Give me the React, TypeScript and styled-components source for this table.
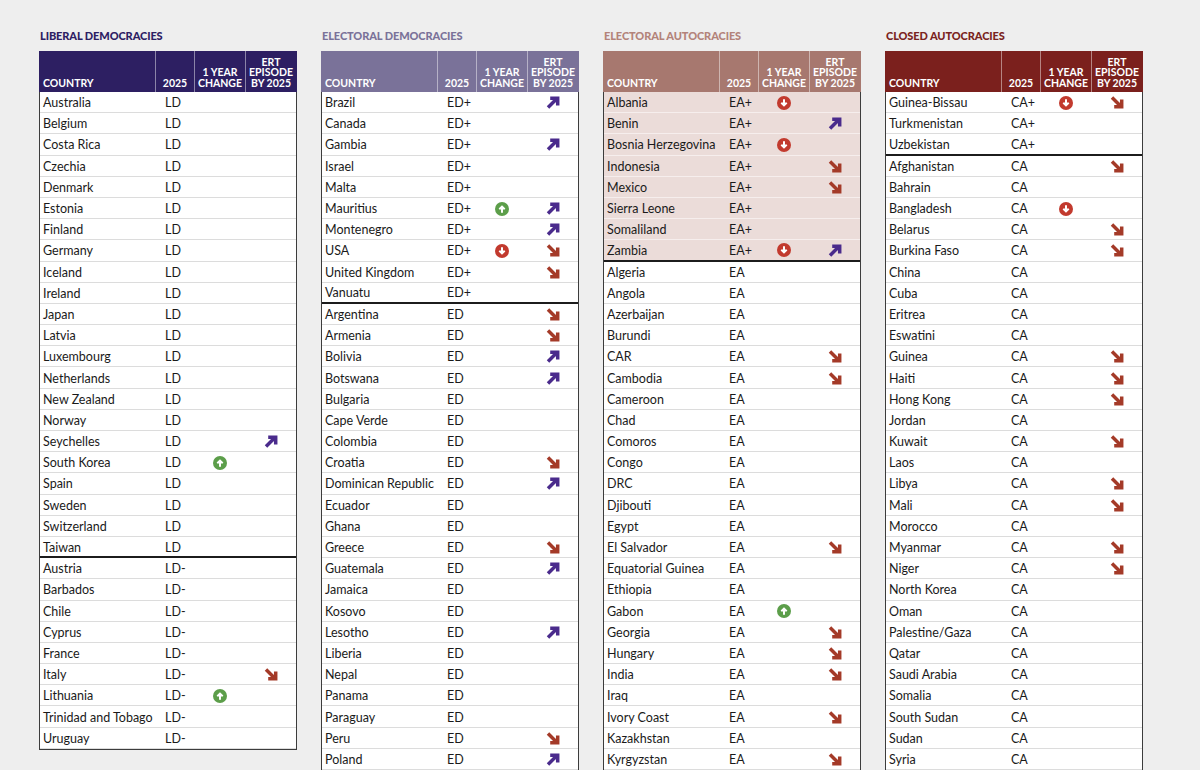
import React from 'react'
import styled, { createGlobalStyle } from 'styled-components'

type Move = 'u' | 'd' | ''

interface Group {
  code: string
  tint?: boolean
  rows: string[]
}

interface Regime {
  title: string
  ink: string
  head: string
  groups: Group[]
}

// rows are written as "Name:change:ert" with u = up, d = down
const regimes: Regime[] = [
  {
    title: 'LIBERAL DEMOCRACIES',
    ink: '#2d2063',
    head: '#2d1f62',
    groups: [
      {
        code: 'LD',
        rows: ['Australia', 'Belgium', 'Costa Rica', 'Czechia', 'Denmark', 'Estonia', 'Finland', 'Germany', 'Iceland', 'Ireland', 'Japan', 'Latvia', 'Luxembourg', 'Netherlands', 'New Zealand', 'Norway', 'Seychelles::u', 'South Korea:u', 'Spain', 'Sweden', 'Switzerland', 'Taiwan'],
      },
      {
        code: 'LD-',
        rows: ['Austria', 'Barbados', 'Chile', 'Cyprus', 'France', 'Italy::d', 'Lithuania:u', 'Trinidad and Tobago', 'Uruguay'],
      },
    ],
  },
  {
    title: 'ELECTORAL DEMOCRACIES',
    ink: '#7a7299',
    head: '#7a7299',
    groups: [
      {
        code: 'ED+',
        rows: ['Brazil::u', 'Canada', 'Gambia::u', 'Israel', 'Malta', 'Mauritius:u:u', 'Montenegro::u', 'USA:d:d', 'United Kingdom::d', 'Vanuatu'],
      },
      {
        code: 'ED',
        rows: ['Argentina::d', 'Armenia::d', 'Bolivia::u', 'Botswana::u', 'Bulgaria', 'Cape Verde', 'Colombia', 'Croatia::d', 'Dominican Republic::u', 'Ecuador', 'Ghana', 'Greece::d', 'Guatemala::u', 'Jamaica', 'Kosovo', 'Lesotho::u', 'Liberia', 'Nepal', 'Panama', 'Paraguay', 'Peru::d', 'Poland::u'],
      },
    ],
  },
  {
    title: 'ELECTORAL AUTOCRACIES',
    ink: '#b3837a',
    head: '#a7786f',
    groups: [
      {
        code: 'EA+',
        tint: true,
        rows: ['Albania:d', 'Benin::u', 'Bosnia Herzegovina:d', 'Indonesia::d', 'Mexico::d', 'Sierra Leone', 'Somaliland', 'Zambia:d:u'],
      },
      {
        code: 'EA',
        rows: ['Algeria', 'Angola', 'Azerbaijan', 'Burundi', 'CAR::d', 'Cambodia::d', 'Cameroon', 'Chad', 'Comoros', 'Congo', 'DRC', 'Djibouti', 'Egypt', 'El Salvador::d', 'Equatorial Guinea', 'Ethiopia', 'Gabon:u', 'Georgia::d', 'Hungary::d', 'India::d', 'Iraq', 'Ivory Coast::d', 'Kazakhstan', 'Kyrgyzstan::d'],
      },
    ],
  },
  {
    title: 'CLOSED AUTOCRACIES',
    ink: '#7a2320',
    head: '#7b201d',
    groups: [
      {
        code: 'CA+',
        rows: ['Guinea-Bissau:d:d', 'Turkmenistan', 'Uzbekistan'],
      },
      {
        code: 'CA',
        rows: ['Afghanistan::d', 'Bahrain', 'Bangladesh:d', 'Belarus::d', 'Burkina Faso::d', 'China', 'Cuba', 'Eritrea', 'Eswatini', 'Guinea::d', 'Haiti::d', 'Hong Kong::d', 'Jordan', 'Kuwait::d', 'Laos', 'Libya::d', 'Mali::d', 'Morocco', 'Myanmar::d', 'Niger::d', 'North Korea', 'Oman', 'Palestine/Gaza', 'Qatar', 'Saudi Arabia', 'Somalia', 'South Sudan', 'Sudan', 'Syria'],
      },
    ],
  },
]

const GlobalStyle = createGlobalStyle`
  html, body {
    margin: 0;
    background: #eeeeee;
  }
  body {
    font-family: Lato, "Liberation Sans", sans-serif;
    color: #1a1a1a;
    overflow: hidden;
  }
`

const Page = styled.div`
  display: flex;
  gap: 24px;
  padding: 29px 0 0 39px;
  height: 770px;
  box-sizing: border-box;
  overflow: hidden;
`

const Column = styled.section`
  width: 258px;
  flex: none;
`

const Title = styled.h2<{ $ink: string }>`
  margin: 0 0 8px 1px;
  height: 14px;
  font-size: 11px;
  line-height: 14px;
  font-weight: 900;
  letter-spacing: -0.1px;
  color: ${p => p.$ink};
`

const Table = styled.div`
  border: 1px solid #3c3c3c;
  border-top: none;
  background: #fff;
`

const COLS = '115px 39px 51px 51px'

const Head = styled.div<{ $head: string }>`
  display: grid;
  grid-template-columns: ${COLS};
  height: 41px;
  margin: 0 -1px;
  padding: 0 1px;
  background: ${p => p.$head};
  color: #fff;
`

const HeadCell = styled.div<{ $align?: 'left' | 'center' }>`
  display: flex;
  flex-direction: column;
  justify-content: flex-end;
  align-items: ${p => (p.$align === 'left' ? 'flex-start' : 'center')};
  text-align: center;
  padding: 0 3px 3px;
  font-size: 10.5px;
  line-height: 10.8px;
  font-weight: 700;
  white-space: nowrap;
  & + & {
    border-left: 1px solid rgba(255, 255, 255, 0.45);
  }
`

const Row = styled.div<{ $tint?: boolean; $split?: boolean }>`
  display: grid;
  grid-template-columns: ${COLS};
  align-items: center;
  height: 21.2px;
  padding-top: 1px;
  box-sizing: border-box;
  background: ${p => (p.$tint ? '#ebdcd9' : '#fff')};
  border-bottom: ${p =>
    p.$split ? '2px solid #1c1c1c' : `1px solid ${p.$tint ? '#f6eeed' : '#dcdcdc'}`};
  font-size: 12.5px;
  white-space: nowrap;
`

const Name = styled.div`
  padding-left: 3px;
`

const Code = styled.div`
  padding-left: 10px;
`

const Mark = styled.div`
  display: flex;
  justify-content: center;
  align-items: center;
`

const Circle = ({ dir }: { dir: Move }) => (
  <svg width="14" height="14" viewBox="0 0 14 14">
    <circle cx="7" cy="7" r="7" fill={dir === 'u' ? '#5c9e4a' : '#c23a2e'} />
    <g transform={dir === 'd' ? 'rotate(180 7 7)' : undefined}>
      <path d="M7 3.2 L10.4 6.6 L9 7.9 L8 6.9 V10.8 H6 V6.9 L5 7.9 L3.6 6.6 Z" fill="#fff" />
    </g>
  </svg>
)

const Arrow = ({ dir }: { dir: Move }) => (
  <svg width="14" height="13" viewBox="0 0 14 13">
    <g transform={dir === 'd' ? 'scale(1,-1) translate(0,-13)' : undefined}>
      <path
        d="M2 11.5 L10.5 3 M4.2 2.2 H11.7 V9.6"
        fill="none"
        stroke={dir === 'u' ? '#4a2b8c' : '#a43a28'}
        strokeWidth="3.5"
        strokeLinejoin="miter"
      />
    </g>
  </svg>
)

const RegimeTable = ({ regime }: { regime: Regime }) => (
  <Column>
    <Title $ink={regime.ink}>{regime.title}</Title>
    <Table>
      <Head $head={regime.head}>
        <HeadCell $align="left">COUNTRY</HeadCell>
        <HeadCell>2025</HeadCell>
        <HeadCell>
          <span>1 YEAR</span>
          <span>CHANGE</span>
        </HeadCell>
        <HeadCell>
          <span>ERT</span>
          <span>EPISODE</span>
          <span>BY 2025</span>
        </HeadCell>
      </Head>
      {regime.groups.map((group, gi) =>
        group.rows.map((raw, ri) => {
          const [name, change = '', ert = ''] = raw.split(':') as [string, Move?, Move?]
          const split = gi < regime.groups.length - 1 && ri === group.rows.length - 1
          return (
            <Row key={name} $tint={group.tint} $split={split}>
              <Name>{name}</Name>
              <Code>{group.code}</Code>
              <Mark>{change && <Circle dir={change} />}</Mark>
              <Mark>{ert && <Arrow dir={ert} />}</Mark>
            </Row>
          )
        })
      )}
    </Table>
  </Column>
)

export default function App() {
  return (
    <>
      <GlobalStyle />
      <Page>
        {regimes.map(r => (
          <RegimeTable key={r.title} regime={r} />
        ))}
      </Page>
    </>
  )
}
